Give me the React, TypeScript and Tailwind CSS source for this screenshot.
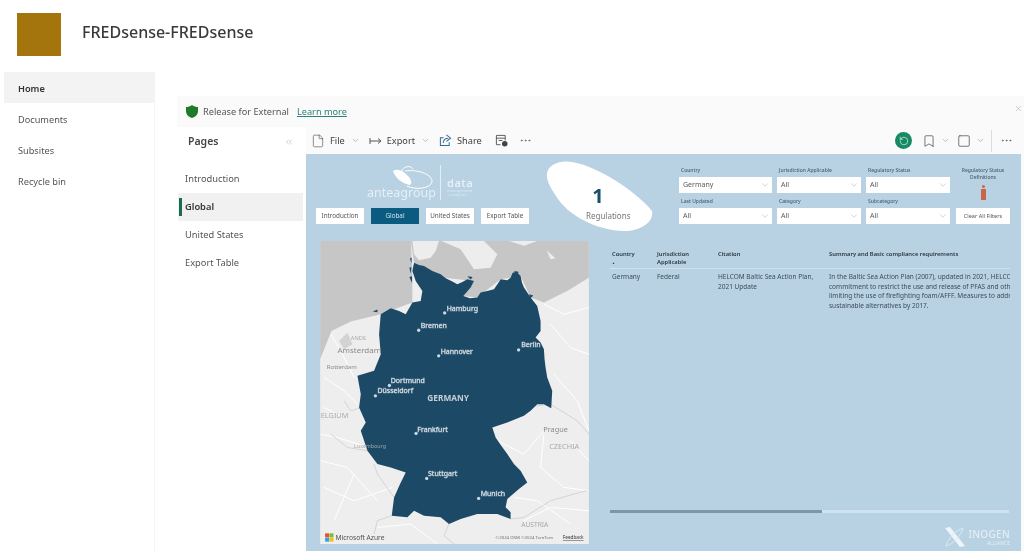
import React from 'react';
import { ChevronDown, ChevronsLeft, File, Bookmark, Square, Ellipsis, X, RotateCcw } from 'lucide-react';

const navItems = ['Home', 'Documents', 'Subsites', 'Recycle bin'];
const pages = ['Introduction', 'Global', 'United States', 'Export Table'];
const reportTabs = ['Introduction', 'Global', 'United States', 'Export Table'];

const germany =
  'M310,85 L325,92 L340,95 L365,110 L390,120 L405,132 L425,142 L440,150 L455,143 L470,135 L490,140 L480,160 L458,185 L478,192 L500,190 L510,175 L530,170 L550,165 L562,148 L570,135 L590,138 L600,130 L606,115 L618,112 L630,125 L634,145 L640,160 L660,190 L680,215 L690,260 L690,290 L675,310 L690,325 L700,345 L702,375 L705,400 L710,430 L725,470 L722,522 L700,510 L680,510 L660,530 L640,545 L590,565 L545,580 L555,610 L572,635 L590,660 L610,690 L630,710 L650,745 L625,765 L590,795 L585,820 L600,835 L600,855 L560,840 L500,840 L450,855 L415,870 L390,850 L340,845 L310,830 L290,850 L243,845 L250,790 L268,750 L285,715 L240,700 L200,690 L170,650 L150,590 L165,565 L145,520 L150,480 L140,425 L190,410 L200,385 L210,360 L205,300 L210,240 L240,222 L265,230 L285,240 L305,205 L330,200 L335,170 L315,140 L305,110 Z';

const cities: [string, number, number, number, number][] = [
  ['Hamburg', 402, 236, 408, 230],
  ['Bremen', 324, 288, 330, 282],
  ['Hannover', 384, 365, 390, 358],
  ['Berlin', 624, 347, 632, 338],
  ['Dortmund', 236, 454, 240, 447],
  ['Düsseldorf', 194, 485, 200, 478],
  ['Frankfurt', 316, 598, 320, 593],
  ['Stuttgart', 348, 733, 352, 726],
  ['Munich', 504, 793, 510, 785],
];

function GermanyMap() {
  return (
    <svg viewBox="28 20 807 910" className="h-[303px] w-[269px] shrink-0 self-start">
      <rect x="28" y="20" width="807" height="910" fill="#eeeeee" />
      <path
        d="M28,20 L300,20 L305,110 L305,205 L210,240 L120,262 L62,290 L28,375 Z M300,20 L835,20 L835,130 L770,170 L700,205 L660,190 L630,125 L570,135 L500,190 L458,185 L490,140 L400,130 L310,85 Z"
        fill="#c6c6c6"
      />
      <path
        d="M305,20 L385,20 L375,50 L360,70 L325,78 L310,60 Z M392,20 L450,45 L490,105 L540,100 L560,60 L520,20 Z M595,20 L680,20 L640,34 Z M708,48 L735,72 L720,75 Z"
        fill="#ededed"
      />
      <path
        d="M40,430 L100,470 L140,510 M30,600 L80,610 L170,640 M40,760 L130,800 L245,760 M60,300 L95,360 L130,430 M720,270 L780,340 L835,360 M730,420 L800,500 L835,590 M700,600 L690,700 L760,760 L835,770 M640,860 L720,820 L835,830 M200,880 L300,870 L380,930 M560,620 L640,660 L700,590 M700,210 L760,240 L835,220 M30,680 L110,700 L200,800 M130,720 L70,860 M610,790 L680,800 L780,870 M780,620 L835,680 M40,520 L90,545"
        fill="none"
        stroke="#ffffff"
        strokeWidth="3"
      />
      <path
        d="M150,520 L120,530 L100,500 M170,650 L110,640 L60,600 M250,790 L200,720 L190,690 M243,845 L200,860 L190,900 M600,855 L640,850 L720,800 L790,780 L830,770 M545,580 L640,520 L720,510 L800,560 L835,600 M415,870 L400,905 L430,930"
        fill="none"
        stroke="#d4d4d4"
        strokeWidth="3"
      />
      <path d="M85,320 L110,295 L125,330 L100,345 Z" fill="#d3d3d3" />
      <path d={germany} fill="#1c4966" />
      <path
        d="M298,72 L303,70 L302,88 Z M296,100 L302,98 L300,118 Z M296,128 L304,126 L304,146 Z M186,232 L200,226 L200,234 Z M470,126 L486,128 L480,136 Z M610,110 L624,112 L620,122 Z M655,180 L668,184 L660,192 Z"
        fill="#1c4966"
      />
      <g fontFamily="'Noto Sans', sans-serif" fontSize="21" fill="#dfe6ea" stroke="#6d8a9c" strokeWidth="2.5" paintOrder="stroke">
        {cities.map(([name, px, py, tx, ty]) => (
          <g key={name}>
            <circle cx={px} cy={py} r="5" fill="#c7d9e6" stroke="none" />
            <text x={tx} y={ty}>{name}</text>
          </g>
        ))}
        <text x="350" y="501" fontSize="25" fontWeight="700" fill="#c6ced3" stroke="none">GERMANY</text>
      </g>
      <g fontFamily="'Noto Sans', sans-serif" fontSize="22" fill="#8b8b8b">
        <text x="80" y="355" fontSize="24">Amsterdam</text>
        <text x="48" y="404" fontSize="18">Rotterdam</text>
        <text x="120" y="316" fontSize="17" fill="#ababab">ANDS</text>
        <text x="30" y="552" fill="#ababab">ELGIUM</text>
        <text x="698" y="593">Prague</text>
        <text x="716" y="646" fill="#a8a8a8">CZECHIA</text>
        <text x="632" y="880" fontSize="20" fill="#a8a8a8">AUSTRIA</text>
        <text x="130" y="642" fontSize="16" fill="#a8a8a8">Luxembourg</text>
      </g>
      <g>
        <rect x="43" y="898" width="12" height="12" fill="#e8512a" />
        <rect x="56" y="898" width="12" height="12" fill="#7ebb35" />
        <rect x="43" y="911" width="12" height="12" fill="#2aa4e8" />
        <rect x="56" y="911" width="12" height="12" fill="#f8bb1c" />
        <text x="74" y="918" fontFamily="'Noto Sans', sans-serif" fontSize="20" fill="#505050">Microsoft Azure</text>
        <text x="555" y="916" fontFamily="'Noto Sans', sans-serif" fontSize="13" fill="#6e6e6e">©2024 OSM  ©2024 TomTom</text>
        <text x="757" y="916" fontFamily="'Noto Sans', sans-serif" fontSize="14" fill="#333333" textDecoration="underline">Feedback</text>
      </g>
    </svg>
  );
}

function AnteaLogo() {
  return (
    <div className="ml-[51px] flex h-[38px] items-center text-white">
      <div className="relative h-[38px] w-[70px]">
        <svg viewBox="0 0 70 38" className="absolute inset-0">
          <path d="M26,8 C30,5 36,7 42,14 C45,18 45,22 42,22 C35,20 28,15 26,8 Z" fill="#fff" />
          <path d="M34,9 C36,3 44,2 46,6 M38,8 C52,6 66,12 65,19 C63,26 48,27 40,23" fill="none" stroke="#fff" strokeWidth="1" />
        </svg>
        <span className="absolute bottom-[2px] left-0 whitespace-nowrap text-[12.5px] leading-none text-[#e7f0f6]">anteagroup</span>
      </div>
      <div className="mx-[3px] h-[35px] w-px bg-white/60" />
      <div className="flex w-[36px] flex-col pl-[3px] pt-[10px] leading-none">
        <span className="text-[11px] font-semibold tracking-[0.5px] text-[#e7f0f6]">data</span>
        <span className="mt-[1px] text-[4px] text-[#dce9f2]">management</span>
        <span className="text-[4px] text-[#dce9f2]">+ analytics</span>
      </div>
    </div>
  );
}

function FilterSelect({ label, value }: { label: string; value: string }) {
  return (
    <div className="flex flex-col">
      <span className="mb-[3px] h-[7px] pl-[2px] text-[5px] font-medium leading-[7px] text-[#4a6070]">{label}</span>
      <div className="flex h-[16px] items-center justify-between bg-white pl-[4px] pr-[2px] text-[7px] text-[#5a5a5a]">
        {value}
        <ChevronDown className="h-[10px] w-[10px] text-[#8a9aa5]" strokeWidth={1} />
      </div>
    </div>
  );
}

function TopFilters() {
  return (
    <div className="ml-[25px] flex items-start gap-[6px] pt-[13px]">
      <div className="grid grid-cols-[93px_84px_84px] gap-x-[5px] gap-y-[5px]">
        <FilterSelect label="Country" value="Germany" />
        <FilterSelect label="Jurisdiction Applicable" value="All" />
        <FilterSelect label="Regulatory Status" value="All" />
        <FilterSelect label="Last Updated" value="All" />
        <FilterSelect label="Category" value="All" />
        <FilterSelect label="Subcategory" value="All" />
      </div>
      <div className="flex w-[54px] flex-col items-center">
        <span className="text-center text-[5px] font-medium leading-[7px] text-[#4a6070]">Regulatory Status Definitions</span>
        <div className="mt-[4px] flex flex-col items-center gap-[1px]">
          <div className="h-[3px] w-[3px] rounded-full bg-[#c9664a]" />
          <div className="h-[11px] w-[5px] bg-[#c9664a]" />
        </div>
        <div className="mt-[8px] flex h-[16px] w-[54px] items-center justify-center bg-white text-[5.5px] text-[#555555]">Clear All Filters</div>
      </div>
    </div>
  );
}

function RegulationsBlob() {
  return (
    <div className="relative mt-[7px] h-[70px] w-[108px] shrink-0">
      <svg viewBox="0 0 108 70" className="absolute inset-0">
        <path d="M1,12 C3,3 14,-1 26,1 C50,5 88,28 106,50 C108,60 96,70 78,70 C56,70 26,58 12,38 C5,28 0,20 1,12 Z" fill="#fff" />
      </svg>
      <div className="absolute left-[32px] top-[24px] w-[40px] text-center text-[20px] font-bold leading-[22px] text-[#15506e]">1</div>
      <div className="absolute left-[40px] top-[49px] text-[8px] leading-[11px] text-[#777777]">Regulations</div>
    </div>
  );
}

function RegulationTable() {
  return (
    <div className="ml-[21px] flex min-w-0 flex-1 flex-col overflow-hidden pr-[11px] text-[6.5px] leading-[9.5px] text-[#3c4d5a]">
      <div className="grid h-[28px] shrink-0 grid-cols-[45px_61px_111px_1fr] border-b border-[#cfe0ec] pl-[2px] pt-[9px] text-[5.8px] font-semibold text-[#283742]">
        <div className="flex flex-col">
          <span>Country</span>
          <span className="mt-[1px] text-[3px] leading-[4px]">▲</span>
        </div>
        <span className="leading-[8px]">Jurisdiction<br />Applicable</span>
        <span>Citation</span>
        <span className="whitespace-nowrap">Summary and Basic compliance requirements</span>
      </div>
      <div className="grid grid-cols-[45px_61px_111px_1fr] pl-[2px] pt-[3px]">
        <span>Germany</span>
        <span>Federal</span>
        <span className="pr-[8px]">HELCOM Baltic Sea Action Plan, 2021 Update</span>
        <div className="overflow-hidden whitespace-nowrap">
          <div>In the Baltic Sea Action Plan (2007), updated in 2021, HELCOM</div>
          <div>commitment to restrict the use and release of PFAS and other</div>
          <div>limiting the use of firefighting foam/AFFF. Measures to address</div>
          <div>sustainable alternatives by 2017.</div>
        </div>
      </div>
      <div className="mt-auto flex h-[4px] w-[399px] shrink-0">
        <div className="h-[3px] w-[212px] bg-[#7d96aa]" />
        <div className="h-[3px] flex-1 bg-[#cfe2f2]" />
      </div>
      <div className="mb-[3px] mt-[12px] flex h-[22px] shrink-0 items-center justify-end gap-[1px] text-[#e4eef5]">
        <svg viewBox="0 0 24 22" className="h-[22px] w-[24px]">
          <path d="M2,2 L7,1 L22,20 L17,21 Z" fill="#eef5fa" />
          <path d="M20,2 C18,10 10,18 3,20 C5,12 12,5 20,2 Z" fill="none" stroke="#dce9f2" strokeWidth="1" />
        </svg>
        <div className="flex flex-col items-end gap-[2px] leading-none">
          <span className="text-[10px] font-medium tracking-[0.3px]">INOGEN</span>
          <span className="text-[5px]">ALLIANCE</span>
        </div>
      </div>
    </div>
  );
}

function Toolbar() {
  return (
    <div className="flex h-[27px] items-center pl-[5px] text-[9.2px] text-[#404040]">
      <File className="h-[14px] w-[14px]" strokeWidth={1} />
      <span className="ml-[5px]">File</span>
      <ChevronDown className="ml-[6px] h-[9px] w-[9px] text-[#777777]" strokeWidth={1.2} />
      <svg viewBox="0 0 14 10" className="ml-[9px] h-[10px] w-[14px]" fill="none" stroke="#555555" strokeWidth="1">
        <path d="M1,2 V8 M1,5 H12 M9,2.5 L12,5 L9,7.5" />
      </svg>
      <span className="ml-[4px]">Export</span>
      <ChevronDown className="ml-[6px] h-[9px] w-[9px] text-[#777777]" strokeWidth={1.2} />
      <svg viewBox="0 0 14 14" className="ml-[9px] h-[13px] w-[13px]" fill="none" stroke="#2e6f9e" strokeWidth="1.1">
        <path d="M5,4 H1.5 V12.5 H11 V9" />
        <path d="M4.5,9.5 C5,6 7.5,4.5 10,4.5 M8,1 L12.5,4.5 L8,8" />
      </svg>
      <span className="ml-[5px]">Share</span>
      <svg viewBox="0 0 14 14" className="ml-[13px] h-[13px] w-[13px]" fill="none" stroke="#555555" strokeWidth="1">
        <path d="M1.5,1.5 H11 V7 M1.5,1.5 V11.5 H6 M1.5,4.5 H11 M4,7 H8" />
        <circle cx="10.5" cy="10.5" r="3" fill="#444444" stroke="none" />
      </svg>
      <Ellipsis className="ml-[11px] h-[13px] w-[13px] text-[#555555]" strokeWidth={1.2} />
      <div className="ml-auto flex items-center pr-[11px]">
        <div className="flex h-[17px] w-[17px] items-center justify-center rounded-full bg-[#168a62]">
          <RotateCcw className="h-[10px] w-[10px] text-white" strokeWidth={1.5} />
        </div>
        <Bookmark className="ml-[10px] h-[14px] w-[14px] text-[#444444]" strokeWidth={1.2} />
        <ChevronDown className="ml-[5px] h-[9px] w-[9px] text-[#777777]" strokeWidth={1.2} />
        <Square className="ml-[7px] h-[14px] w-[14px] text-[#444444]" strokeWidth={1.2} />
        <ChevronDown className="ml-[5px] h-[9px] w-[9px] text-[#777777]" strokeWidth={1.2} />
        <div className="ml-[6px] h-[22px] w-px bg-[#dddddd]" />
        <Ellipsis className="ml-[8px] h-[13px] w-[13px] text-[#555555]" strokeWidth={1.2} />
      </div>
    </div>
  );
}

export default function App() {
  return (
    <div className="flex h-[551px] w-[1024px] flex-col overflow-hidden bg-white font-['Noto_Sans',sans-serif] blur-[0.35px]">
      {/* Site header */}
      <div className="flex h-[72px] shrink-0 items-start pl-[17px] pt-[13px]">
        <div className="h-[43px] w-[44px] bg-[#a5750d]" />
        <h1 className="ml-[21px] mt-[7px] text-[16px] font-medium leading-[24px] text-[#3a3a3a]">FREDsense-FREDsense</h1>
      </div>

      <div className="flex min-h-0 flex-1">
        {/* Left nav */}
        <div className="ml-[4px] w-[151px] shrink-0 border-r border-[#f4f4f4]">
          {navItems.map((item) => (
            <div
              key={item}
              className={`flex h-[31px] items-center pl-[14px] pt-[2px] text-[9.2px] ${item === 'Home' ? 'bg-[#f3f3f3] font-semibold text-[#333333]' : 'text-[#555555]'}`}
            >
              {item}
            </div>
          ))}
        </div>

        <div className="ml-[22px] mt-[24px] flex min-w-0 flex-1 flex-col bg-[#fafafa]">
          {/* Sensitivity banner */}
          <div className="relative flex h-[31px] shrink-0 items-center pl-[9px] text-[9.2px]">
            <svg viewBox="0 0 12 13" className="h-[13px] w-[12px]">
              <path d="M6,0 C8,1.5 10,2 12,2 V6 C12,9.5 9.5,12 6,13 C2.5,12 0,9.5 0,6 V2 C2,2 4,1.5 6,0 Z" fill="#217a2b" />
            </svg>
            <span className="ml-[5px] text-[#555555]">Release for External</span>
            <a className="ml-[8px] text-[#2f7f79] underline">Learn more</a>
            <X className="absolute right-[1px] top-[8px] h-[9px] w-[9px] text-[#888888]" strokeWidth={1} />
          </div>

          <div className="flex min-h-0 flex-1">
            {/* Pages pane */}
            <div className="w-[129px] shrink-0 bg-white">
              <div className="flex h-[30px] items-center justify-between pl-[11px] pr-[12px]">
                <span className="text-[10.5px] font-semibold text-[#444444]">Pages</span>
                <ChevronsLeft className="h-[10px] w-[10px] text-[#888888]" strokeWidth={1} />
              </div>
              <div className="mt-[8px]">
                {pages.map((page) => (
                  <div
                    key={page}
                    className={`flex h-[28px] items-center text-[9.3px] ${page === 'Global' ? 'mr-[3px] ml-[1px] bg-[#f1f1f1] pl-[1px] font-semibold text-[#333333]' : 'pl-[8px] text-[#555555]'}`}
                  >
                    {page === 'Global' && <div className="mr-[3px] h-[18px] w-[3px] bg-[#1a6b55]" />}
                    {page}
                  </div>
                ))}
              </div>
            </div>

            {/* Report */}
            <div className="flex min-w-0 flex-1 flex-col">
              <Toolbar />
              <div className="mr-[3px] flex min-h-0 flex-1 flex-col bg-[#b8d1e3]">
                <div className="flex h-[87px] shrink-0">
                  <div className="w-[240px] shrink-0 pl-[10px] pt-[9px]">
                    <AnteaLogo />
                    <div className="mt-[7px] flex gap-[7px]">
                      {reportTabs.map((tab) => (
                        <div
                          key={tab}
                          className={`flex h-[16px] w-[48px] items-center justify-center text-[6.3px] ${tab === 'Global' ? 'bg-[#0b5a80] text-[#cfe3ef]' : 'bg-white text-[#555555]'}`}
                        >
                          {tab}
                        </div>
                      ))}
                    </div>
                  </div>
                  <RegulationsBlob />
                  <TopFilters />
                </div>
                <div className="flex min-h-0 flex-1 pl-[14px]">
                  <GermanyMap />
                  <RegulationTable />
                </div>
              </div>
            </div>
          </div>
        </div>
      </div>
    </div>
  );
}
